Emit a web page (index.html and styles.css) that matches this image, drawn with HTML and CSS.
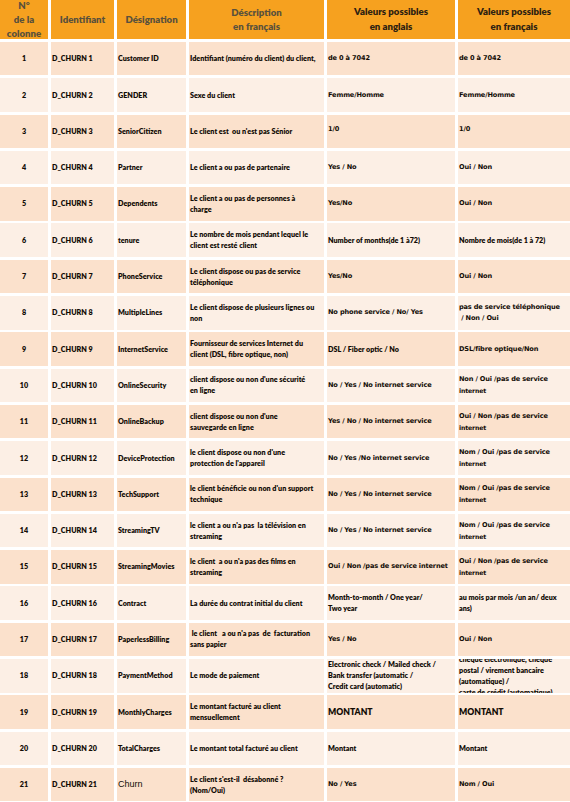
FILE: index.html
```html
<!DOCTYPE html>
<html lang="fr">
<head>
<meta charset="utf-8">
<title>Dictionnaire des colonnes</title>
<link rel="stylesheet" href="styles.css">
</head>
<body>
<div class="table">
  <div class="row head">
    <div class="c num">N°<br>de la<br>colonne</div>
    <div class="c ctr">Identifiant</div>
    <div class="c ctr">Désignation</div>
    <div class="c ctr">Déscription<br>en français</div>
    <div class="c ctr dark">Valeurs possibles<br>en anglais</div>
    <div class="c ctr dark">Valeurs possibles<br>en français</div>
  </div>

  <div class="row odd">
    <div class="c num">1</div><div class="c">D_CHURN 1</div><div class="c">Customer ID</div>
    <div class="c">Identifiant (numéro du client) du client,</div>
    <div class="c g">de 0 à 7042</div><div class="c g">de 0 à 7042</div>
  </div>
  <div class="row even">
    <div class="c num">2</div><div class="c">D_CHURN 2</div><div class="c">GENDER</div>
    <div class="c">Sexe du client</div>
    <div class="c g">Femme/Homme</div><div class="c g">Femme/Homme</div>
  </div>
  <div class="row odd">
    <div class="c num">3</div><div class="c">D_CHURN 3</div><div class="c">SeniorCitizen</div>
    <div class="c">Le client est&nbsp; ou n'est pas Sénior</div>
    <div class="c g up">1/0</div><div class="c g up">1/0</div>
  </div>
  <div class="row even">
    <div class="c num">4</div><div class="c">D_CHURN 4</div><div class="c">Partner</div>
    <div class="c">Le client a ou pas de partenaire</div>
    <div class="c g">Yes / No</div><div class="c g">Oui / Non</div>
  </div>
  <div class="row odd">
    <div class="c num">5</div><div class="c">D_CHURN 5</div><div class="c">Dependents</div>
    <div class="c">Le client a ou pas de personnes à<br>charge</div>
    <div class="c g">Yes/No</div><div class="c g">Oui / Non</div>
  </div>
  <div class="row even">
    <div class="c num">6</div><div class="c">D_CHURN 6</div><div class="c">tenure</div>
    <div class="c">Le nombre de mois pendant lequel le<br>client est resté client</div>
    <div class="c">Number of months(de 1 à72)</div><div class="c">Nombre de mois(de 1 à 72)</div>
  </div>
  <div class="row odd">
    <div class="c num">7</div><div class="c">D_CHURN 7</div><div class="c">PhoneService</div>
    <div class="c">Le client dispose ou pas de service<br>téléphonique</div>
    <div class="c g">Yes/No</div><div class="c g">Oui / Non</div>
  </div>
  <div class="row even">
    <div class="c num">8</div><div class="c">D_CHURN 8</div><div class="c">MultipleLines</div>
    <div class="c">Le client dispose de plusieurs lignes ou<br>non</div>
    <div class="c g">No phone service / No/ Yes</div><div class="c g">pas de service téléphonique<br>&nbsp;/ Non / Oui</div>
  </div>
  <div class="row odd">
    <div class="c num">9</div><div class="c">D_CHURN 9</div><div class="c">InternetService</div>
    <div class="c">Fournisseur de services Internet du<br>client (DSL, fibre optique, non)</div>
    <div class="c">DSL / Fiber optic / No</div><div class="c g">DSL/fibre optique/Non</div>
  </div>
  <div class="row even">
    <div class="c num">10</div><div class="c">D_CHURN 10</div><div class="c">OnlineSecurity</div>
    <div class="c">client dispose ou non d'une sécurité<br>en ligne</div>
    <div class="c g">No / Yes / No internet service</div><div class="c g">Non / Oui /pas de service<br><span class="sm">internet</span></div>
  </div>
  <div class="row odd">
    <div class="c num">11</div><div class="c">D_CHURN 11</div><div class="c">OnlineBackup</div>
    <div class="c">client dispose ou non d'une<br>sauvegarde en ligne</div>
    <div class="c g">Yes / No / No internet service</div><div class="c g">Oui / Non /pas de service<br><span class="sm">internet</span></div>
  </div>
  <div class="row even">
    <div class="c num">12</div><div class="c">D_CHURN 12</div><div class="c">DeviceProtection</div>
    <div class="c">le client dispose ou non d'une<br>protection de l'appareil</div>
    <div class="c g">No / Yes /No internet service</div><div class="c g">Nom / Oui /pas de service<br><span class="sm">internet</span></div>
  </div>
  <div class="row odd">
    <div class="c num">13</div><div class="c">D_CHURN 13</div><div class="c">TechSupport</div>
    <div class="c">le client bénéficie ou non d'un support<br>technique</div>
    <div class="c g">No / Yes / No internet service</div><div class="c g">Nom / Oui /pas de service<br><span class="sm">internet</span></div>
  </div>
  <div class="row even">
    <div class="c num">14</div><div class="c">D_CHURN 14</div><div class="c">StreamingTV</div>
    <div class="c">le client a ou n'a pas&nbsp; la télévision en<br>streaming</div>
    <div class="c g">No / Yes / No internet service</div><div class="c g">Nom / Oui /pas de service<br><span class="sm">internet</span></div>
  </div>
  <div class="row odd">
    <div class="c num">15</div><div class="c">D_CHURN 15</div><div class="c">StreamingMovies</div>
    <div class="c">le client&nbsp; a ou n'a pas des films en<br>streaming</div>
    <div class="c g">Oui / Non /pas de service internet</div><div class="c g">Oui / Non /pas de service<br><span class="sm">internet</span></div>
  </div>
  <div class="row even">
    <div class="c num">16</div><div class="c">D_CHURN 16</div><div class="c">Contract</div>
    <div class="c">La durée du contrat initial du client</div>
    <div class="c">Month-to-month / One year/<br>Two year</div><div class="c">au mois par mois /un an/ deux<br>ans)</div>
  </div>
  <div class="row odd">
    <div class="c num">17</div><div class="c">D_CHURN 17</div><div class="c">PaperlessBilling</div>
    <div class="c">&nbsp;le client&nbsp;&nbsp; a ou n'a pas&nbsp; de&nbsp; facturation<br>sans papier</div>
    <div class="c g">Yes / No</div><div class="c g">Oui / Non</div>
  </div>
  <div class="row even">
    <div class="c num">18</div><div class="c">D_CHURN 18</div><div class="c">PaymentMethod</div>
    <div class="c">Le mode de paiement</div>
    <div class="c">Electronic check / Mailed check /<br>Bank transfer (automatic /<br>Credit card (automatic)</div>
    <div class="c">chèque électronique, chèque<br>postal / virement bancaire<br>(automatique) /<br>carte de crédit (automatique)</div>
  </div>
  <div class="row odd">
    <div class="c num">19</div><div class="c">D_CHURN 19</div><div class="c">MonthlyCharges</div>
    <div class="c">Le montant facturé au client<br>mensuellement</div>
    <div class="c big">MONTANT</div><div class="c big">MONTANT</div>
  </div>
  <div class="row even">
    <div class="c num">20</div><div class="c">D_CHURN 20</div><div class="c">TotalCharges</div>
    <div class="c">Le montant total facturé au client</div>
    <div class="c">Montant</div><div class="c">Montant</div>
  </div>
  <div class="row odd">
    <div class="c num">21</div><div class="c">D_CHURN 21</div><div class="c plain">Churn</div>
    <div class="c">Le client s'est-il&nbsp; désabonné ?<br>(Nom/Oui)</div>
    <div class="c g">No / Yes</div><div class="c g">Nom / Oui</div>
  </div>
</div>
</body>
</html>
```

FILE: styles.css
```css
html, body {
  margin: 0;
  padding: 0;
  background: #ffffff;
}
body {
  width: 570px;
  height: 802px;
  overflow: hidden;
  font-family: Lato, "Open Sans", sans-serif;
}
.table {
  display: flex;
  flex-direction: column;
  gap: 2.8px;
}
.row {
  display: grid;
  grid-template-columns: 48px 63px 69px 135px 128px 1fr;
  column-gap: 3px;
  height: 33.5px;
}
.row.head {
  height: 39.2px;
}
.c {
  display: flex;
  flex-direction: column;
  justify-content: center;
  overflow: hidden;
  white-space: nowrap;
  padding-left: 1px;
  font-size: 7.2px;
  font-weight: 800;
  line-height: 11px;
  color: #120c05;
}
.odd .c { background: #fbe1cc; }
.even .c { background: #fcefe5; }
.head .c {
  background: #f6a11f;
  color: #5a513c;
  font-size: 9.6px;
  font-weight: 800;
  line-height: 14px;
  text-align: center;
  align-items: center;
  padding-left: 0;
}
.head .c.dark {
  color: #2e2212;
  line-height: 14.5px;
}
.c.num {
  text-align: center;
  align-items: center;
  padding-left: 0;
}
.g {
  font-family: "DejaVu Sans", Lato, sans-serif;
  font-weight: 700;
  font-size: 6.6px;
  letter-spacing: -0.15px;
}
.sm {
  font-size: 6.2px;
}
.up {
  padding-bottom: 4px;
}
.big {
  font-size: 8.6px;
}
.plain {
  font-family: "Liberation Sans", Arial, sans-serif;
  font-weight: 400;
  font-size: 9px;
}
```
